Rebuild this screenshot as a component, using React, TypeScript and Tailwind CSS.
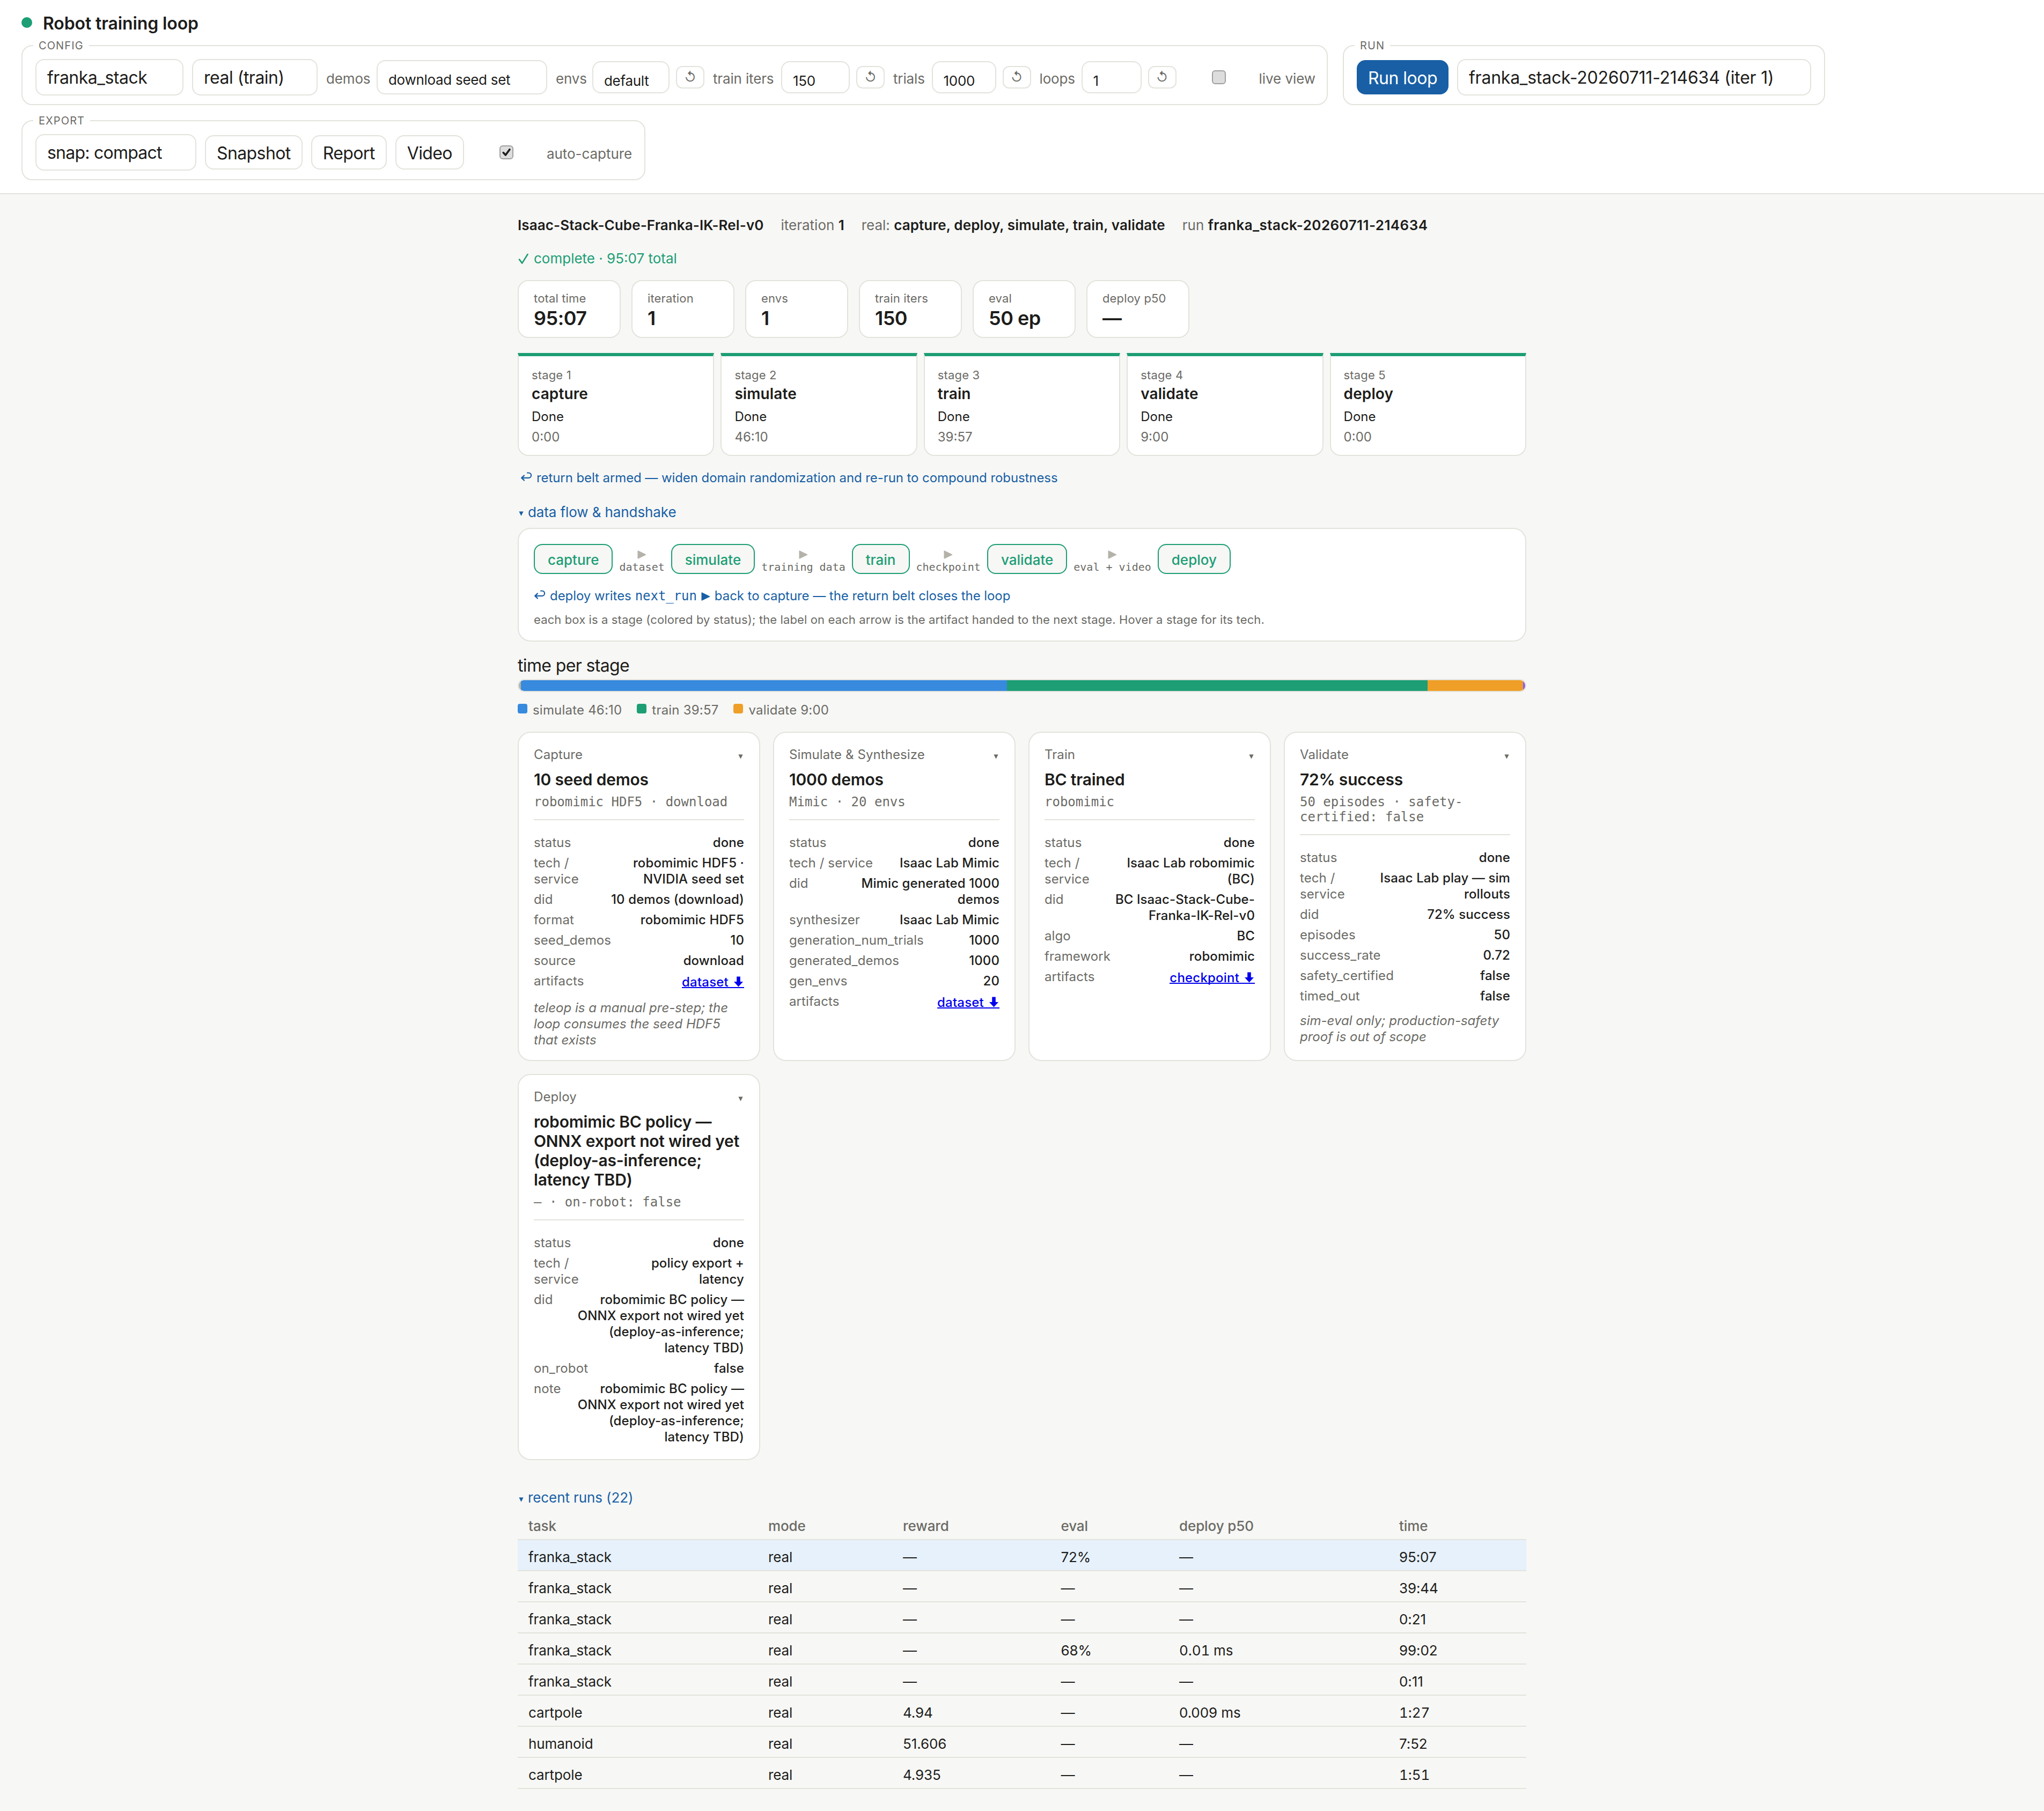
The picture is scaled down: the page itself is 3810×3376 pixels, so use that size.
import type { ReactNode } from "react";

type Row = { key: string; value?: string[]; link?: string };

type StageCard = {
	title: string;
	headline: string[];
	tech: string[];
	rows: Row[];
	note?: string[];
};

const metrics = [
	{ label: "total time", value: "95:07" },
	{ label: "iteration", value: "1" },
	{ label: "envs", value: "1" },
	{ label: "train iters", value: "150" },
	{ label: "eval", value: "50 ep" },
	{ label: "deploy p50", value: "—" },
];

const stages = [
	{ name: "capture", time: "0:00" },
	{ name: "simulate", time: "46:10" },
	{ name: "train", time: "39:57" },
	{ name: "validate", time: "9:00" },
	{ name: "deploy", time: "0:00" },
];

// artifact handed over after each stage
const artifacts = ["dataset", "training data", "checkpoint", "eval + video"];

const legend = [
	{ label: "simulate 46:10", color: "bg-[#378add]" },
	{ label: "train 39:57", color: "bg-[#1d9e75]" },
	{ label: "validate 9:00", color: "bg-[#ef9f27]" },
];

const cards: StageCard[] = [
	{
		title: "Capture",
		headline: ["10 seed demos"],
		tech: ["robomimic HDF5 · download"],
		rows: [
			{ key: "status", value: ["done"] },
			{ key: "tech /\nservice", value: ["robomimic HDF5 ·", "NVIDIA seed set"] },
			{ key: "did", value: ["10 demos (download)"] },
			{ key: "format", value: ["robomimic HDF5"] },
			{ key: "seed_demos", value: ["10"] },
			{ key: "source", value: ["download"] },
			{ key: "artifacts", link: "dataset" },
		],
		note: ["teleop is a manual pre-step; the", "loop consumes the seed HDF5", "that exists"],
	},
	{
		title: "Simulate & Synthesize",
		headline: ["1000 demos"],
		tech: ["Mimic · 20 envs"],
		rows: [
			{ key: "status", value: ["done"] },
			{ key: "tech / service", value: ["Isaac Lab Mimic"] },
			{ key: "did", value: ["Mimic generated 1000", "demos"] },
			{ key: "synthesizer", value: ["Isaac Lab Mimic"] },
			{ key: "generation_num_trials", value: ["1000"] },
			{ key: "generated_demos", value: ["1000"] },
			{ key: "gen_envs", value: ["20"] },
			{ key: "artifacts", link: "dataset" },
		],
	},
	{
		title: "Train",
		headline: ["BC trained"],
		tech: ["robomimic"],
		rows: [
			{ key: "status", value: ["done"] },
			{ key: "tech /\nservice", value: ["Isaac Lab robomimic", "(BC)"] },
			{ key: "did", value: ["BC Isaac-Stack-Cube-", "Franka-IK-Rel-v0"] },
			{ key: "algo", value: ["BC"] },
			{ key: "framework", value: ["robomimic"] },
			{ key: "artifacts", link: "checkpoint" },
		],
	},
	{
		title: "Validate",
		headline: ["72% success"],
		tech: ["50 episodes · safety-", "certified: false"],
		rows: [
			{ key: "status", value: ["done"] },
			{ key: "tech /\nservice", value: ["Isaac Lab play — sim", "rollouts"] },
			{ key: "did", value: ["72% success"] },
			{ key: "episodes", value: ["50"] },
			{ key: "success_rate", value: ["0.72"] },
			{ key: "safety_certified", value: ["false"] },
			{ key: "timed_out", value: ["false"] },
		],
		note: ["sim-eval only; production-safety", "proof is out of scope"],
	},
	{
		title: "Deploy",
		headline: ["robomimic BC policy —", "ONNX export not wired yet", "(deploy-as-inference;", "latency TBD)"],
		tech: ["— · on-robot: false"],
		rows: [
			{ key: "status", value: ["done"] },
			{ key: "tech /\nservice", value: ["policy export +", "latency"] },
			{
				key: "did",
				value: ["robomimic BC policy —", "ONNX export not wired yet", "(deploy-as-inference;", "latency TBD)"],
			},
			{ key: "on_robot", value: ["false"] },
			{
				key: "note",
				value: ["robomimic BC policy —", "ONNX export not wired yet", "(deploy-as-inference;", "latency TBD)"],
			},
		],
	},
];

const columns = [
	{ label: "task", width: "w-[447px]" },
	{ label: "mode", width: "w-[251px]" },
	{ label: "reward", width: "w-[294.5px]" },
	{ label: "eval", width: "w-[220.5px]" },
	{ label: "deploy p50", width: "w-[410px]" },
	{ label: "time", width: "w-[257px]" },
];

const runs = [
	["franka_stack", "real", "—", "72%", "—", "95:07"],
	["franka_stack", "real", "—", "—", "—", "39:44"],
	["franka_stack", "real", "—", "—", "—", "0:21"],
	["franka_stack", "real", "—", "68%", "0.01 ms", "99:02"],
	["franka_stack", "real", "—", "—", "—", "0:11"],
	["cartpole", "real", "4.94", "—", "0.009 ms", "1:27"],
	["humanoid", "real", "51.606", "—", "—", "7:52"],
	["cartpole", "real", "4.935", "—", "—", "1:51"],
];

function CaretDown({ className = "" }: { className?: string }) {
	return (
		<svg viewBox="0 0 9 9" className={`h-[9px] w-[9px] fill-current ${className}`}>
			<path d="M0.4 0.4h8.2L4.5 8.8z" />
		</svg>
	);
}

function ArrowHead({ className = "" }: { className?: string }) {
	return (
		<svg viewBox="0 0 17 16" className={`h-4 w-[17px] fill-current ${className}`}>
			<path d="M0.5 1.4Q0.5 0 1.8 0.5L15.6 7.2Q17 8 15.6 8.8L1.8 15.5Q0.5 16 0.5 14.6z" />
		</svg>
	);
}

function ReturnArrow() {
	return (
		<svg viewBox="0 0 22 18" className="mt-1 h-[18px] w-[22px] fill-none stroke-current" strokeWidth="2.2" strokeLinecap="round" strokeLinejoin="round">
			<path d="M13 1.5h2.4a4.7 4.7 0 0 1 0 9.4H2.4M7 6.4L2.2 10.9L7 15.4" />
		</svg>
	);
}

function Group({ title, children }: { title: string; children: ReactNode }) {
	return (
		<fieldset className="rounded-[20px] border-2 border-[#e3e3dd] px-6 pt-[13px] pb-4">
			<legend className="-ml-1 px-2.5 text-[20px] leading-6 tracking-[1.1px] text-[#6b6b66]">{title}</legend>
			<div className="flex items-center gap-4">{children}</div>
		</fieldset>
	);
}

function Select({ width, children }: { width: string; children: ReactNode }) {
	return (
		<div className={`h-[68px] rounded-2xl border-2 border-[#e3e3dd] bg-white px-5 pt-[14px] text-[32px] leading-[38px] tracking-[-0.5px] whitespace-nowrap ${width}`}>
			{children}
		</div>
	);
}

function Button({ children }: { children: ReactNode }) {
	return (
		<button type="button" className="h-16 rounded-2xl border-2 border-[#e3e3dd] bg-white px-5 pt-[3px] text-[32px] leading-[38px] tracking-[-0.6px]">
			{children}
		</button>
	);
}

function Field({ label, labelWidth, value, width, large }: { label: string; labelWidth: string; value: string; width: string; large?: boolean }) {
	return (
		<div className="flex items-center gap-3">
			<label className={`pt-[5px] text-[26px] leading-8 tracking-[-0.15px] whitespace-nowrap text-[#6b6b66] ${labelWidth}`}>{label}</label>
			<div
				className={`rounded-2xl border-2 border-[#e3e3dd] bg-white px-5 pt-[19px] text-[26px] leading-8 tracking-[-0.3px] whitespace-nowrap ${large ? "h-16" : "h-[60px]"} ${width}`}
			>
				{value}
			</div>
			{!large && (
				<button
					type="button"
					className="h-[42px] w-[53px] rounded-xl border-2 border-[#e3e3dd] bg-white text-[23px] leading-[34px] text-[#6b6b66]"
				>
					↺
				</button>
			)}
		</div>
	);
}

function Check({ label, width, checked }: { label: string; width: string; checked?: boolean }) {
	return (
		<div className="flex items-center gap-3">
			<div className="flex w-[126px] justify-center">
				<div className="flex h-[26px] w-[26px] items-center justify-center rounded-[6px] border-2 border-[#a0a0a0] bg-[#dddddd]">
					{checked && (
						<svg viewBox="0 0 20 20" className="h-5 w-5 fill-none stroke-[#1d1d1b]" strokeWidth="3.6" strokeLinecap="round" strokeLinejoin="round">
							<path d="M4.2 10.6L8.4 15L16 4.6" />
						</svg>
					)}
				</div>
			</div>
			<label className={`pt-[5px] text-[26px] leading-8 tracking-[-0.05px] whitespace-nowrap text-[#6b6b66] ${width}`}>{label}</label>
		</div>
	);
}

function Card({ card }: { card: StageCard }) {
	return (
		<section className="rounded-3xl border-2 border-[#e3e3dd] bg-white px-7 pt-[26px] text-[24px] leading-[30px]">
			<div className="flex items-center justify-between text-[#6b6b66]">
				<span className="tracking-[0.1px]">{card.title}</span>
				<CaretDown className="mt-1.5 mr-0.5" />
			</div>
			<h3 className="mt-[13px] text-[30px] leading-9 font-semibold tracking-[-0.2px] whitespace-nowrap">
				{card.headline.map((line) => (
					<div key={line}>{line}</div>
				))}
			</h3>
			<div className="mt-[10px] font-['DejaVu_Sans_Mono',monospace] leading-7 whitespace-nowrap text-[#6b6b66]">
				{card.tech.map((line) => (
					<div key={line}>{line}</div>
				))}
			</div>
			<dl className="mt-[18px] flex flex-col gap-2 border-t-2 border-[#e3e3dd] pt-[27px]">
				{card.rows.map((row) => (
					<div key={row.key} className="flex justify-between">
						<dt className="tracking-[0.1px] whitespace-pre text-[#6b6b66]">{row.key}</dt>
						<dd className="text-right font-medium tracking-[0.1px] whitespace-nowrap">
							{row.value?.map((line) => (
								<div key={line}>{line}</div>
							))}
							{row.link && <DownloadLink label={row.link} />}
						</dd>
					</div>
				))}
			</dl>
			{card.note && (
				<p className="mt-4 whitespace-nowrap text-[#6b6b66] italic">
					{card.note.map((line) => (
						<span key={line} className="block">{line}</span>
					))}
				</p>
			)}
		</section>
	);
}

function DownloadLink({ label }: { label: string }) {
	return (
		<a href="#" className="mt-1 mb-1.5 flex h-6 gap-2 border-b-2 border-[#0000ee] leading-[26px] tracking-[0.2px] text-[#0000ee]">
			{label}
			<svg viewBox="0 0 21 20" className="mt-0.5 h-5 w-[21px] fill-current">
				<path d="M7.2 0.5h6.6v9.6H19L10.5 19.4L2 10.1h5.2z" />
			</svg>
		</a>
	);
}

export default function App() {
	return (
		<div className="min-h-[3376px] bg-[#f7f7f5] font-['Inter','Liberation_Sans',sans-serif] text-[#1d1d1b]">
			<header className="border-b-2 border-[#e3e3dd] bg-white px-10 pt-[25px] pb-6">
				<div className="flex gap-5">
					<span className="mt-[7px] h-5 w-5 rounded-full bg-[#1d9e75]" />
					<h1 className="text-[32px] leading-[38px] font-semibold tracking-[-0.12px]">Robot training loop</h1>
				</div>
				<div className="mt-[10px] flex flex-wrap gap-x-7 gap-y-[17px]">
					<Group title="CONFIG">
						<Select width="w-[276px]">franka_stack</Select>
						<Select width="w-[234px]">real (train)</Select>
						<Field label="demos" labelWidth="w-[82px]" value="download seed set" width="w-[318px]" large />
						<Field label="envs" labelWidth="w-14" value="default" width="w-36" />
						<Field label="train iters" labelWidth="w-[115px]" value="150" width="w-32" />
						<Field label="trials" labelWidth="w-[59.5px]" value="1000" width="w-[120px]" />
						<Field label="loops" labelWidth="w-[66px]" value="1" width="w-28" />
						<Check label="live view" width="w-[102.5px]" />
					</Group>
					<Group title="RUN">
						<button type="button" className="h-16 w-[171px] rounded-2xl bg-[#185fa5] pt-[3px] text-[32px] leading-[38px] tracking-[-0.5px] text-white">
							Run loop
						</button>
						<Select width="w-[660px]">
							<span className="tracking-[-0.24px]">franka_stack-20260711-214634 (iter 1)</span>
						</Select>
					</Group>
					<Group title="EXPORT">
						<Select width="w-[300px]">
							<span className="tracking-[-0.77px]">snap: compact</span>
						</Select>
						<Button>Snapshot</Button>
						<Button>Report</Button>
						<Button>Video</Button>
						<Check label="auto-capture" width="w-[158px]" checked />
					</Group>
				</div>
			</header>

			<main className="mx-auto w-[1880px] pt-[42px]">
				<div className="flex gap-8 text-[26px] leading-8 whitespace-nowrap text-[#6b6b66]">
					<b className="font-semibold tracking-[0.1px] text-[#1d1d1b]">Isaac-Stack-Cube-Franka-IK-Rel-v0</b>
					<span>
						iteration <b className="font-semibold text-[#1d1d1b]">1</b>
					</span>
					<span>
						real: <b className="font-semibold tracking-[0.12px] text-[#1d1d1b]">capture, deploy, simulate, train, validate</b>
					</span>
					<span>
						run <b className="font-semibold tracking-[0.43px] text-[#1d1d1b]">franka_stack-20260711-214634</b>
					</span>
				</div>

				<div className="mt-[30px] flex text-[26px] leading-8 text-[#1d9e75]">
					<svg viewBox="0 0 30 32" className="h-8 w-[30px] fill-none stroke-current" strokeWidth="2.6" strokeLinecap="round" strokeLinejoin="round">
						<path d="M3 17.6L8.2 24.6L18.6 8" />
					</svg>
					complete · 95:07 total
				</div>

				<div className="mt-6 flex gap-5">
					{metrics.map((m) => (
						<div key={m.label} className="h-[108px] w-48 rounded-[20px] border-2 border-[#e3e3dd] bg-white px-7 pt-[19px]">
							<div className="text-[22px] leading-[26px] tracking-[0.15px] whitespace-nowrap text-[#6b6b66]">{m.label}</div>
							<div className="mt-0.5 text-[36px] leading-[44px] font-semibold tracking-[-0.5px]">{m.value}</div>
						</div>
					))}
				</div>

				<div className="mt-7 grid grid-cols-5 gap-3">
					{stages.map((s, i) => (
						<div key={s.name} className="h-48 rounded-b-[20px] border-2 border-t-6 border-[#e3e3dd] border-t-[#1d9e75] bg-white px-6 pt-[22px] text-[24px] leading-[30px]">
							<div className="text-[22px] leading-[26px] tracking-[0.15px] text-[#6b6b66]">stage {i + 1}</div>
							<div className="mt-[5px] text-[28px] leading-[34px] font-semibold tracking-[0.1px]">{s.name}</div>
							<div className="mt-[11px]">Done</div>
							<div className="mt-2 text-[#6b6b66]">{s.time}</div>
						</div>
					))}
				</div>

				<div className="mt-[26px] flex gap-2 pl-[5px] text-[24px] leading-[30px] tracking-[-0.08px] text-[#185fa5]">
					<ReturnArrow />
					return belt armed — widen domain randomization and re-run to compound robustness
				</div>

				<div className="mt-[33px] flex items-center gap-2 pl-[2px] text-[26px] leading-8 tracking-[-0.1px] text-[#185fa5]">
					<CaretDown className="mt-1" />
					data flow &amp; handshake
				</div>

				<section className="mt-[13px] h-[212px] rounded-3xl border-2 border-[#e3e3dd] bg-white px-7 pt-7">
					<div className="flex items-center gap-3">
						{stages.map((s, i) => (
							<div key={s.name} className="flex items-center gap-3">
								<div className="h-14 rounded-2xl border-2 border-[#1d9e75] bg-[#f7f7f5] px-6 pt-3 text-[26px] leading-8 font-medium text-[#1d9e75]">
									{s.name}
								</div>
								{artifacts[i] && (
									<div className="flex flex-col items-center pt-[10px]">
										<ArrowHead className="text-[#b4b2a9]" />
										<span className="mt-1 font-['DejaVu_Sans_Mono',monospace] text-[20px] leading-[22px] text-[#6b6b66]">{artifacts[i]}</span>
									</div>
								)}
							</div>
						))}
					</div>
					<div className="mt-[26px] flex text-[24px] leading-[30px] tracking-[-0.06px] text-[#185fa5]">
						<ReturnArrow />
						<span className="ml-2">deploy writes</span>
						<code className="ml-[7px] font-['DejaVu_Sans_Mono',monospace]">next_run</code>
						<ArrowHead className="mt-2 ml-2" />
						<span className="ml-2">back to capture — the return belt closes the loop</span>
					</div>
					<p className="mt-4 text-[22px] leading-[26px] tracking-[0.12px] text-[#6b6b66]">
						each box is a stage (colored by status); the label on each arrow is the artifact handed to the next stage. Hover a stage for its tech.
					</p>
				</section>

				<h2 className="mt-[26px] text-[32px] leading-[38px] tracking-[-0.64px]">time per stage</h2>
				<div className="mt-1.5 flex h-6 overflow-hidden rounded-xl border-2 border-[#e3e3dd]">
					<div className="w-1 bg-[#b4b2a9]" />
					<div className="w-[906px] bg-[#378add]" />
					<div className="w-[784px] bg-[#1d9e75]" />
					<div className="w-[178px] bg-[#ef9f27]" />
					<div className="w-1 bg-[#8b5cf6]" />
				</div>
				<div className="mt-[19px] flex gap-7 text-[24px] leading-[30px] tracking-[0.2px] text-[#6b6b66]">
					{legend.map((l) => (
						<span key={l.label} className="flex gap-[10px]">
							<i className={`mt-[3px] h-[18px] w-[18px] rounded-[4px] ${l.color}`} />
							{l.label}
						</span>
					))}
				</div>

				<div className="mt-[25px] grid grid-cols-4 grid-rows-[614px_720px] gap-6">
					{cards.map((card) => (
						<Card key={card.title} card={card} />
					))}
				</div>

				<div className="mt-[54px] flex items-center gap-2 pl-[2px] text-[26px] leading-8 tracking-[-0.1px] text-[#185fa5]">
					<CaretDown className="mt-1.5" />
					recent runs (22)
				</div>
				<table className="w-full table-fixed border-separate border-spacing-0 text-left text-[26px] leading-8 tracking-[-0.1px]">
					<thead>
						<tr className="text-[#6b6b66]">
							{columns.map((c) => (
								<th key={c.label} className={`border-b-2 border-[#e3e3dd] px-5 pt-[21px] pb-2 font-medium ${c.width}`}>
									{c.label}
								</th>
							))}
						</tr>
					</thead>
					<tbody>
						{runs.map((run, i) => (
							<tr key={i} className={i === 0 ? "bg-[#e6f1fb]" : ""}>
								{run.map((cell, j) => (
									<td key={j} className={`border-b-2 border-[#e3e3dd] px-5 pt-4 pb-2 ${/^1:|\.01 /.test(cell) ? "tabular-nums" : ""}`}>
										{cell}
									</td>
								))}
							</tr>
						))}
					</tbody>
				</table>
			</main>
		</div>
	);
}
